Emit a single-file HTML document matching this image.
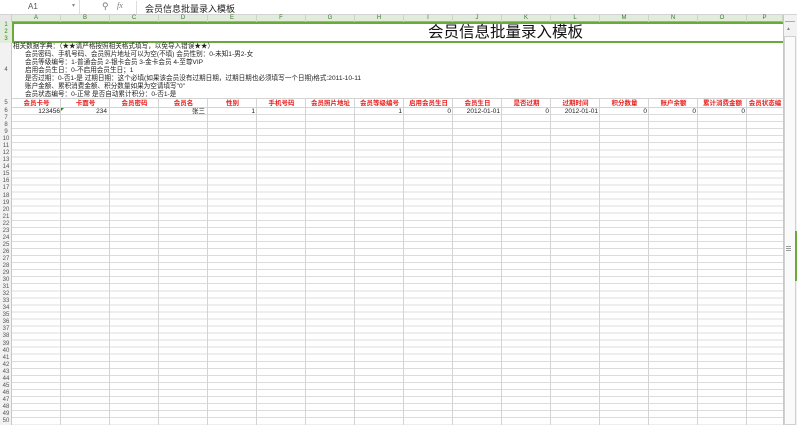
<!DOCTYPE html>
<html><head><meta charset="utf-8"><style>
*{margin:0;padding:0;box-sizing:border-box}
body{width:797px;height:425px;overflow:hidden;background:#fff;font-family:"Liberation Sans","Noto Sans CJK SC",sans-serif;position:relative}
.a{position:absolute;white-space:nowrap}
#fb{left:0;top:0;width:797px;height:15px;background:#fff;border-bottom:1px solid #d4d4d4}
#ch{left:0;top:15px;width:783px;height:7px;background:#e2ecdc;border-bottom:1px solid #8fbf72}
.cl{position:absolute;top:0;height:7px;font-size:6px;line-height:7px;color:#3a7a2a;text-align:center;border-right:1px solid #c8d8c0}
#rh{left:0;top:22px;width:12px;height:403px;background:#f2f2f2;border-right:1px solid #c8c8c8}
.rn{position:absolute;left:0;width:12px;font-size:6px;color:#555;text-align:center}
#grid{left:12px;top:108px;width:771px;height:317px;
background-image:repeating-linear-gradient(90deg,transparent 0,transparent 48px,#d4d4d4 48px,#d4d4d4 49px),repeating-linear-gradient(180deg,transparent 0,transparent 6.05px,#dcdcdc 6.05px,#dcdcdc 7.05px)}
#r5{left:12px;top:98px;width:771px;height:10px;border-top:1px solid #d4d4d4;border-bottom:1px solid #d4d4d4;
background-image:repeating-linear-gradient(90deg,transparent 0,transparent 48px,#d4d4d4 48px,#d4d4d4 49px)}
.h{position:absolute;top:99px;width:49px;font-size:6.5px;line-height:9px;color:#e8201e;text-align:center;font-weight:bold}
.v{position:absolute;top:108px;font-size:6.5px;line-height:7px;color:#222;text-align:right}
.t{font-size:6.6px;line-height:8px;color:#222}
</style></head><body>
<div id="fb" class="a">
 <div class="a" style="left:28px;top:2px;font-size:8px;color:#555">A1</div>
 <div class="a" style="left:72px;top:2px;font-size:6px;color:#888">▾</div>
 <div class="a" style="left:79px;top:0;width:1px;height:15px;background:#ddd"></div>
 <div class="a" style="left:102px;top:1px;font-size:9px;color:#777">⚲</div>
 <div class="a" style="left:117px;top:1px;font-size:8px;color:#777;font-style:italic;font-family:'Liberation Serif',serif">fx</div>
 <div class="a" style="left:136px;top:1px;width:661px;height:13px;border-left:1px solid #ddd"></div>
 <div class="a" style="left:145px;top:2px;font-size:9px;color:#222">会员信息批量录入模板</div>
</div>
<div id="ch" class="a">
 <div class="a" style="left:0;top:0;width:12px;height:7px;background:#e8e8e8;border-right:1px solid #ccc"></div>
 <div class="cl" style="left:12px;width:49px">A</div><div class="cl" style="left:61px;width:49px">B</div><div class="cl" style="left:110px;width:49px">C</div><div class="cl" style="left:159px;width:49px">D</div><div class="cl" style="left:208px;width:49px">E</div><div class="cl" style="left:257px;width:49px">F</div><div class="cl" style="left:306px;width:49px">G</div><div class="cl" style="left:355px;width:49px">H</div><div class="cl" style="left:404px;width:49px">I</div><div class="cl" style="left:453px;width:49px">J</div><div class="cl" style="left:502px;width:49px">K</div><div class="cl" style="left:551px;width:49px">L</div><div class="cl" style="left:600px;width:49px">M</div><div class="cl" style="left:649px;width:49px">N</div><div class="cl" style="left:698px;width:49px">O</div><div class="cl" style="left:747px;width:36px">P</div>
</div>
<div id="rh" class="a">
 <div class="a" style="left:0;top:0;width:12px;height:21px;background:#e2ecdc"></div>
 <div class="rn" style="top:0;line-height:7px;color:#3a7a2a">1</div>
 <div class="rn" style="top:7px;line-height:7px;color:#3a7a2a">2</div>
 <div class="rn" style="top:14px;line-height:7px;color:#3a7a2a">3</div>
 <div class="rn" style="top:44px;line-height:8px">4</div>
 <div class="rn" style="top:76px;line-height:10px">5</div>
 <div class="rn" style="top:86px;line-height:7px">6</div>
 <div class="a" style="left:0;top:93px;width:12px;height:310px;display:flex;flex-direction:column">
 <div class="rn" style="position:static;flex:1;line-height:7px">7</div><div class="rn" style="position:static;flex:1;line-height:7px">8</div><div class="rn" style="position:static;flex:1;line-height:7px">9</div><div class="rn" style="position:static;flex:1;line-height:7px">10</div><div class="rn" style="position:static;flex:1;line-height:7px">11</div><div class="rn" style="position:static;flex:1;line-height:7px">12</div><div class="rn" style="position:static;flex:1;line-height:7px">13</div><div class="rn" style="position:static;flex:1;line-height:7px">14</div><div class="rn" style="position:static;flex:1;line-height:7px">15</div><div class="rn" style="position:static;flex:1;line-height:7px">16</div><div class="rn" style="position:static;flex:1;line-height:7px">17</div><div class="rn" style="position:static;flex:1;line-height:7px">18</div><div class="rn" style="position:static;flex:1;line-height:7px">19</div><div class="rn" style="position:static;flex:1;line-height:7px">20</div><div class="rn" style="position:static;flex:1;line-height:7px">21</div><div class="rn" style="position:static;flex:1;line-height:7px">22</div><div class="rn" style="position:static;flex:1;line-height:7px">23</div><div class="rn" style="position:static;flex:1;line-height:7px">24</div><div class="rn" style="position:static;flex:1;line-height:7px">25</div><div class="rn" style="position:static;flex:1;line-height:7px">26</div><div class="rn" style="position:static;flex:1;line-height:7px">27</div><div class="rn" style="position:static;flex:1;line-height:7px">28</div><div class="rn" style="position:static;flex:1;line-height:7px">29</div><div class="rn" style="position:static;flex:1;line-height:7px">30</div><div class="rn" style="position:static;flex:1;line-height:7px">31</div><div class="rn" style="position:static;flex:1;line-height:7px">32</div><div class="rn" style="position:static;flex:1;line-height:7px">33</div><div class="rn" style="position:static;flex:1;line-height:7px">34</div><div class="rn" style="position:static;flex:1;line-height:7px">35</div><div class="rn" style="position:static;flex:1;line-height:7px">36</div><div class="rn" style="position:static;flex:1;line-height:7px">37</div><div class="rn" style="position:static;flex:1;line-height:7px">38</div><div class="rn" style="position:static;flex:1;line-height:7px">39</div><div class="rn" style="position:static;flex:1;line-height:7px">40</div><div class="rn" style="position:static;flex:1;line-height:7px">41</div><div class="rn" style="position:static;flex:1;line-height:7px">42</div><div class="rn" style="position:static;flex:1;line-height:7px">43</div><div class="rn" style="position:static;flex:1;line-height:7px">44</div><div class="rn" style="position:static;flex:1;line-height:7px">45</div><div class="rn" style="position:static;flex:1;line-height:7px">46</div><div class="rn" style="position:static;flex:1;line-height:7px">47</div><div class="rn" style="position:static;flex:1;line-height:7px">48</div><div class="rn" style="position:static;flex:1;line-height:7px">49</div><div class="rn" style="position:static;flex:1;line-height:7px">50</div>
 </div>
</div>
<!-- title merged cells -->
<div class="a" style="left:12px;top:22px;width:771px;height:21px;border:2px solid #6aaa3a;border-right:none"></div>
<div class="a" style="left:428px;top:23px;font-size:15.5px;line-height:19px;color:#111">会员信息批量录入模板</div>
<!-- row 4 -->
<div class="a t" style="left:13px;top:43px">相关数据字典：（★★请严格按照相关格式填写，以免导入错误★★）</div>
<div class="a t" style="left:25px;top:51px">会员密码、手机号码、会员照片地址可以为空(不填) 会员性别：0-未知1-男2-女</div>
<div class="a t" style="left:25px;top:59px">会员等级编号：1-普通会员 2-银卡会员 3-金卡会员 4-至尊VIP</div>
<div class="a t" style="left:25px;top:67px">启用会员生日：0-不启用会员生日；1</div>
<div class="a t" style="left:25px;top:75px">是否过期：0-否1-是  过期日期：这个必填(如果该会员没有过期日期，过期日期也必须填写一个日期)格式:2011-10-11</div>
<div class="a t" style="left:25px;top:83px">账户金额、累积消费金额、积分数量如果为空请填写"0"</div>
<div class="a t" style="left:25px;top:91px">会员状态编号：0-正常  是否自动累计积分：0-否1-是</div>
<div id="r5" class="a"></div>
<div class="h" style="left:12px">会员卡号</div><div class="h" style="left:61px">卡面号</div><div class="h" style="left:110px">会员密码</div><div class="h" style="left:159px">会员名</div><div class="h" style="left:208px">性别</div><div class="h" style="left:257px">手机号码</div><div class="h" style="left:306px">会员照片地址</div><div class="h" style="left:355px">会员等级编号</div><div class="h" style="left:404px">启用会员生日</div><div class="h" style="left:453px">会员生日</div><div class="h" style="left:502px">是否过期</div><div class="h" style="left:551px">过期时间</div><div class="h" style="left:600px">积分数量</div><div class="h" style="left:649px">账户余额</div><div class="h" style="left:698px">累计消费金额</div><div class="h" style="left:747px;width:36px;overflow:hidden">会员状态编</div>
<div id="grid" class="a"></div>
<div class="v" style="left:12px;width:48px">123456</div>
<div class="a" style="left:61px;top:108px;width:0;height:0;border-top:3px solid #1a8a1a;border-right:3px solid transparent"></div>
<div class="v" style="left:61px;width:46px">234</div>
<div class="v" style="left:159px;width:46px">张三</div>
<div class="v" style="left:208px;width:47px">1</div>
<div class="v" style="left:355px;width:47px">1</div>
<div class="v" style="left:404px;width:47px">0</div>
<div class="v" style="left:453px;width:47px">2012-01-01</div>
<div class="v" style="left:502px;width:47px">0</div>
<div class="v" style="left:551px;width:47px">2012-01-01</div>
<div class="v" style="left:600px;width:47px">0</div>
<div class="v" style="left:649px;width:47px">0</div>
<div class="v" style="left:698px;width:47px">0</div>
<!-- scrollbar -->
<div class="a" style="left:783px;top:15px;width:14px;height:410px;background:#f2f2f2;border-left:1px solid #c8c8c8"></div>
<div class="a" style="left:785px;top:16px;width:10px;height:6px;border-bottom:1px solid #aaa"></div>
<div class="a" style="left:786px;top:26px;font-size:5px;color:#888">▲</div>
<div class="a" style="left:784px;top:36px;width:12px;height:389px;background:#fafafa;border:1px solid #d0d0d0"></div>
<div class="a" style="left:786px;top:246px;width:5px;height:1px;background:#999;box-shadow:0 2px 0 #999,0 4px 0 #999"></div>
<div class="a" style="left:795px;top:231px;width:2px;height:50px;background:#6aaa3a"></div>
</body></html>
